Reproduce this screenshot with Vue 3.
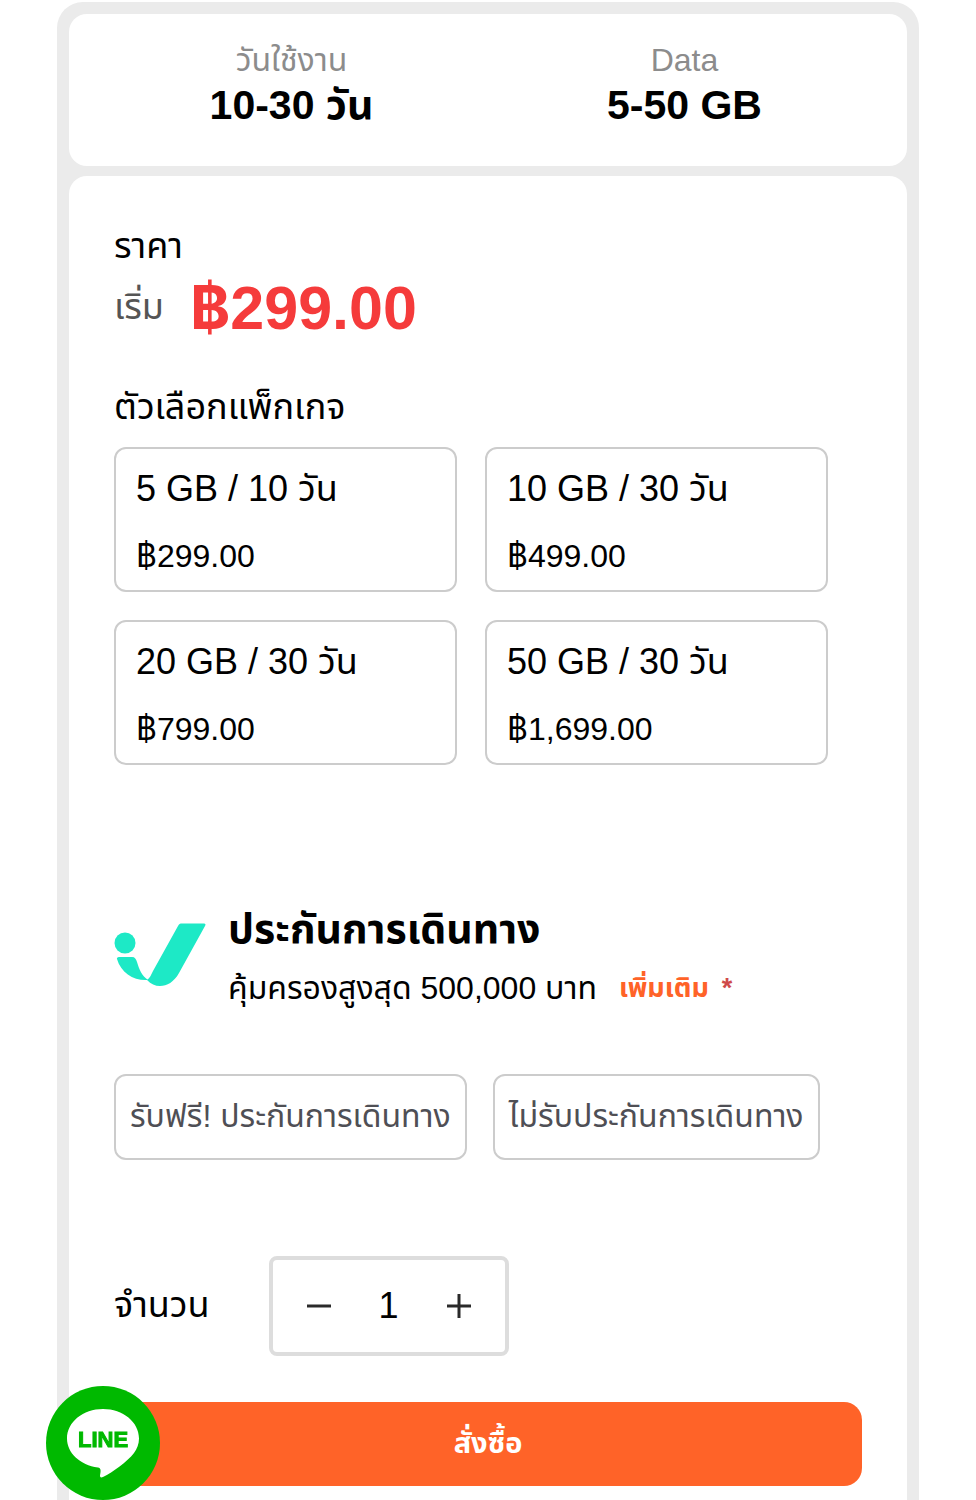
<script setup>
import { ref } from 'vue'

const packages = [
  { id: 'p5', name: '5 GB / 10 วัน', price: '299.00' },
  { id: 'p10', name: '10 GB / 30 วัน', price: '499.00' },
  { id: 'p20', name: '20 GB / 30 วัน', price: '799.00' },
  { id: 'p50', name: '50 GB / 30 วัน', price: '1,699.00' },
]
const insurance = ['รับฟรี! ประกันการเดินทาง', 'ไม่รับประกันการเดินทาง']
const quantity = ref(1)
</script>

<template>
  <main class="product">
    <section class="card summary">
      <div class="fact">
        <span class="fact-label">วันใช้งาน</span>
        <strong class="fact-value">10-30 วัน</strong>
      </div>
      <div class="fact">
        <span class="fact-label">Data</span>
        <strong class="fact-value">5-50 GB</strong>
      </div>
    </section>

    <section class="card order">
      <h2 class="heading">ราคา</h2>
      <p class="price"><span class="from">เริ่ม</span><strong class="amount"><span class="baht">฿</span>299.00</strong></p>

      <h2 class="heading options-title">ตัวเลือกแพ็กเกจ</h2>
      <div class="packages">
        <button v-for="item in packages" :key="item.id" type="button" class="choice package">
          <span class="package-name">{{ item.name }}</span>
          <span class="package-price"><span class="baht">฿</span>{{ item.price }}</span>
        </button>
      </div>

      <div class="insurance">
        <svg class="brand" viewBox="0 0 92 66" aria-hidden="true">
          <circle cx="11" cy="20" r="10.5" />
          <path d="M5 34h13c3 0 4 2 5 5 2 7 5 14 11 18-14 1-27-7-31-21-.4-1 .5-2 2-2Z" />
          <path d="M64 3c1-2 2-2.500 4-2.500h22c1.500 0 2 1 1 2.500L65 50c-5 9-12 13-19 13-5 0-9-2-13-6 3-2 4-5 6-9Z" />
        </svg>
        <div class="insurance-copy">
          <h2 class="insurance-title">ประกันการเดินทาง</h2>
          <p class="insurance-detail">
            <span>คุ้มครองสูงสุด 500,000 บาท</span>
            <a href="#" class="more">เพิ่มเติม</a>
            <span class="required">*</span>
          </p>
        </div>
      </div>

      <div class="insurance-options">
        <button v-for="label in insurance" :key="label" type="button" class="choice plan">{{ label }}</button>
      </div>

      <div class="quantity">
        <label for="quantity" class="quantity-label">จำนวน</label>
        <div class="stepper">
          <button type="button" class="step" aria-label="ลด" @click="quantity = Math.max(1, quantity - 1)">
            <svg viewBox="0 0 24 24"><path d="M0 12h24" /></svg>
          </button>
          <input id="quantity" v-model.number="quantity" class="count" type="text" inputmode="numeric" />
          <button type="button" class="step" aria-label="เพิ่ม" @click="quantity++">
            <svg viewBox="0 0 24 24"><path d="M0 12h24M12 0v24" /></svg>
          </button>
        </div>
      </div>

      <button type="button" class="buy">สั่งซื้อ</button>
    </section>

    <a href="#" class="line" aria-label="LINE">
      <svg viewBox="0 0 114 114">
        <circle cx="57" cy="57" r="57" fill="#00b900" />
        <path fill="#fff" d="M57 23c-20 0-36 13-36 29.500 0 14.500 13 26.500 31 29 3 .5 3 3 2 8 0 2 1 2.500 3 1.500 10-5 24-15 31-24 3-4 5-9 5-14.500 0-16.500-16-29.500-36-29.500Z" />
        <text x="57" y="61" text-anchor="middle">LINE</text>
      </svg>
    </a>
  </main>
</template>

<style>
body {
  margin: 0;
  background: #fff;
}
</style>

<style scoped>
* {
  box-sizing: border-box;
}
h2, p {
  margin: 0;
}
button, input {
  font: inherit;
  color: inherit;
}
button {
  cursor: pointer;
}
.product {
  margin: 2px 57px 0;
  padding: 12px 12px 0;
  background: #ebebeb;
  border-radius: 26px 26px 0 0;
  font-family: "Liberation Sans", "Noto Sans Thai", "Noto Sans", sans-serif;
  color: #000;
}
.card {
  background: #fff;
  border-radius: 18px;
}
.summary {
  display: grid;
  grid-template-columns: 1fr 1fr;
  height: 152px;
  padding: 24px 26px 0;
}
.fact {
  display: flex;
  flex-direction: column;
  align-items: center;
}
.fact-label {
  font-size: 32px;
  line-height: 44px;
  color: #8c8c8c;
}
.fact-value {
  font-size: 41px;
  line-height: 46px;
}
.order {
  margin-top: 10px;
  padding: 46px 45px 14px;
  border-radius: 18px 18px 0 0;
}
.heading {
  font-size: 36px;
  line-height: 48px;
  font-weight: 400;
}
.price {
  display: flex;
  align-items: center;
  gap: 26px;
  height: 76px;
}
.from {
  font-size: 36px;
  color: #555;
}
.amount {
  font-size: 61px;
  line-height: 76px;
  color: #f53b3b;
}
.baht {
  font-family: Inter, "Noto Sans", sans-serif;
  line-height: 1;
}
.options-title {
  margin-top: 37px;
}
.packages {
  display: grid;
  grid-template-columns: 1fr 1fr;
  gap: 28px;
  margin: 16px 34px 0 0;
}
.choice {
  background: #fff;
  border: 2px solid #ccc;
  border-radius: 12px;
}
.package {
  display: flex;
  flex-direction: column;
  justify-content: space-between;
  height: 145px;
  padding: 16px 20px 12px;
  text-align: left;
}
.package-name {
  font-size: 36px;
  line-height: 48px;
}
.package-price {
  font-size: 32px;
  line-height: 44px;
}
.insurance {
  display: flex;
  gap: 22px;
  margin-top: 138px;
}
.brand {
  width: 92px;
  height: 66px;
  margin-top: 20px;
  fill: #1de9c6;
}
.insurance-title {
  font-size: 41px;
  line-height: 52px;
}
.insurance-detail {
  display: flex;
  align-items: center;
  margin-top: 9px;
  font-size: 32px;
  line-height: 48px;
}
.more {
  margin-left: 22px;
  font-size: 27px;
  font-weight: 700;
  color: #ff6328;
  text-decoration: none;
}
.required {
  margin-left: 13px;
  font-size: 27px;
  font-weight: 700;
  color: #cf4a4a;
}
.insurance-options {
  display: flex;
  gap: 26px;
  margin-top: 62px;
}
.plan {
  height: 86px;
  padding: 0 14px;
  font-size: 32px;
  color: #4f4f55;
  white-space: nowrap;
}
.quantity {
  display: flex;
  align-items: center;
  gap: 59px;
  margin-top: 96px;
}
.quantity-label {
  font-size: 36px;
}
.stepper {
  display: flex;
  align-items: center;
  justify-content: space-between;
  width: 240px;
  height: 100px;
  padding: 0 34px;
  border: 4px solid #ddd;
  border-radius: 8px;
}
.step {
  width: 24px;
  height: 24px;
  padding: 0;
  border: 0;
  background: none;
}
.step svg {
  display: block;
  stroke: #2a2a2a;
  stroke-width: 3;
}
.count {
  width: 60px;
  padding: 0;
  border: 0;
  text-align: center;
  font-size: 36px;
}
.buy {
  display: block;
  width: 100%;
  height: 84px;
  margin-top: 46px;
  border: 0;
  border-radius: 18px;
  background: #ff6328;
  color: #fff;
  font-size: 29px;
  font-weight: 700;
}
.line {
  position: fixed;
  left: 46px;
  bottom: 0;
  width: 114px;
  height: 114px;
}
.line text {
  font-family: "Liberation Sans", sans-serif;
  font-size: 22px;
  font-weight: 700;
  fill: #00b900;
  stroke: #00b900;
  stroke-width: 1;
}
</style>
